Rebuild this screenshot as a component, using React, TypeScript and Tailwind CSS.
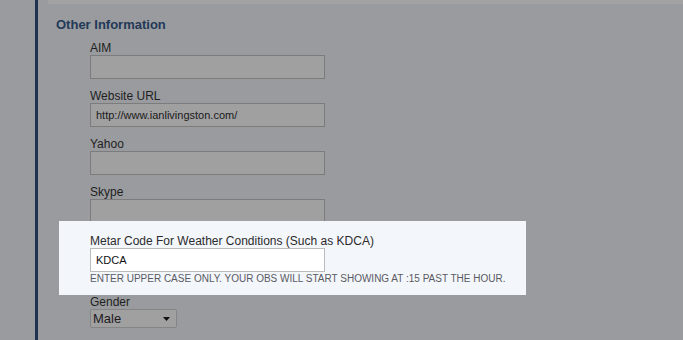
const font = { fontFamily: '"Liberation Sans", Arial, sans-serif' };

function Field({ label, value }: { label: string; value?: string }) {
  return (
    <div className="mb-[10px]">
      <div className="h-[14px] text-[12px] leading-[14px] text-[#1e1f22]">{label}</div>
      <div className="flex h-[24px] w-[235px] items-center border border-[#7c7c7d] bg-[#a0a0a1] pl-[5px] text-[11px] text-[#1a1a1a]">
        {value}
      </div>
    </div>
  );
}

export default function App() {
  return (
    <div className="flex h-[340px] w-[683px] overflow-hidden bg-[#9a9b9f]" style={font}>
      <div className="w-[35px] shrink-0" />
      <div className="w-[3px] shrink-0 bg-[#1d324e]" />
      <div className="flex-1">
        <div className="ml-[10px] h-[4px] bg-[#a2a2a5]" />
        <h2 className="mt-[13px] ml-[18px] text-[13px] font-bold leading-[16px] text-[#223957]">
          Other Information
        </h2>
        <div className="mt-[8px] pl-[52px]">
          <Field label="AIM" />
          <Field label="Website URL" value="http://www.ianlivingston.com/" />
          <Field label="Yahoo" />
          <Field label="Skype" />
        </div>
        <div className="-mt-[12px] ml-[21px] h-[74px] w-[467px] bg-[#f3f6fb] pt-[13px] pl-[31px]">
          <div className="h-[14px] text-[12px] leading-[14px] text-[#2b2b2b]">
            Metar Code For Weather Conditions (Such as KDCA)
          </div>
          <div className="flex h-[24px] w-[235px] items-center border border-[#bcbcbc] bg-white pl-[5px] text-[11px] text-[#111]">
            KDCA
          </div>
          <div className="mt-[1px] text-[10px] leading-[12px] text-[#5a5a62]">
            ENTER UPPER CASE ONLY. YOUR OBS WILL START SHOWING AT :15 PAST THE HOUR.
          </div>
        </div>
        <div className="pl-[52px]">
          <div className="h-[13px] text-[12px] leading-[14px] text-[#1e1f22]">Gender</div>
          <div className="mt-[1px] flex h-[19px] w-[87px] items-center justify-between rounded-[2px] border border-[#858586] bg-[#a0a0a1] pr-[6px] pl-[2px] text-[13px] text-[#1e1a1f]">
            <span>Male</span>
            <svg width="7" height="4" viewBox="0 0 7 4">
              <path d="M0 0h7L3.5 4z" fill="#111" />
            </svg>
          </div>
        </div>
      </div>
    </div>
  );
}
